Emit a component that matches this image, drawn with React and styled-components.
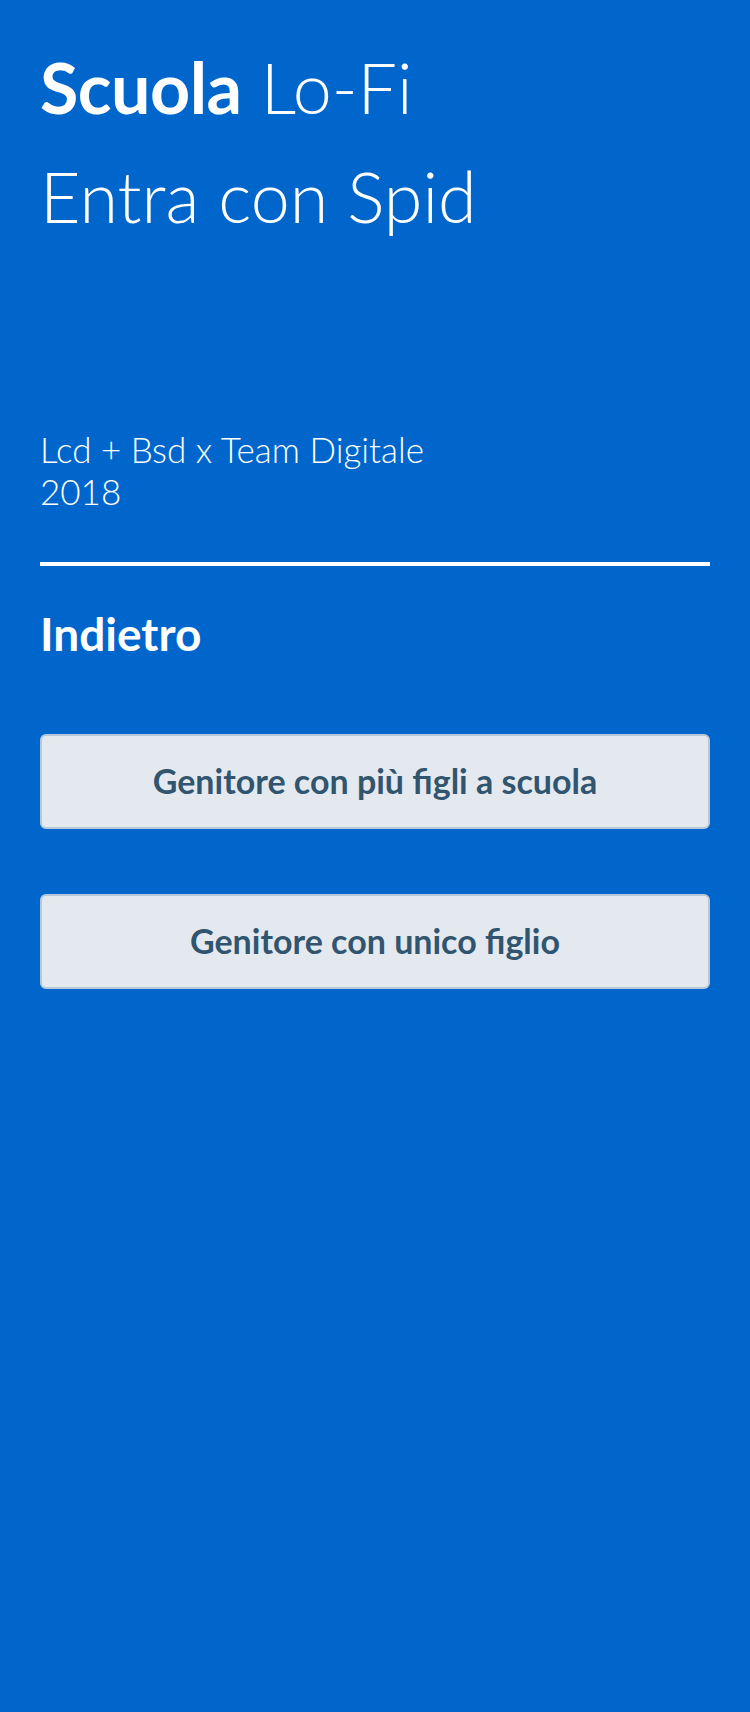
import React from 'react'
import styled, { createGlobalStyle } from 'styled-components'

const GlobalStyle = createGlobalStyle`
  html, body {
    margin: 0;
    padding: 0;
    background: #0066cc;
  }
  body {
    font-family: Lato, "Open Sans", "Liberation Sans", sans-serif;
    color: #fff;
  }
`

const Page = styled.main`
  min-height: 1712px;
  box-sizing: border-box;
  padding: 33px 40px 0;
  background: #0066cc;
`

const Title = styled.h1`
  margin: 0;
  font-size: 70px;
  font-weight: 300;
  line-height: 109px;
  b {
    font-weight: 700;
    letter-spacing: -0.5px;
  }
`

const Credits = styled.p`
  margin: 177px 0 0;
  font-size: 35px;
  font-weight: 300;
  line-height: 42px;
`

const Divider = styled.hr`
  margin: 50px 0 0;
  border: 0;
  height: 4px;
  background: #fff;
`

const Back = styled.a`
  display: block;
  margin-top: 40px;
  font-size: 46px;
  font-weight: 700;
  line-height: 56px;
  color: #fff;
  text-decoration: none;
`

const Choices = styled.div`
  display: flex;
  flex-direction: column;
  gap: 65px;
  margin-top: 72px;
`

const Choice = styled.button`
  height: 95px;
  padding: 0 0 3px;
  border: 2px solid #b7c7da;
  border-radius: 6px;
  background: #e4e9f0;
  color: #31556f;
  font-family: inherit;
  font-size: 34px;
  font-weight: 700;
  cursor: pointer;
`

export default function App() {
  return (
    <>
      <GlobalStyle />
      <Page>
        <Title>
          <b>Scuola</b> Lo-Fi
          <br />
          Entra con Spid
        </Title>
        <Credits>
          Lcd + Bsd x Team Digitale
          <br />
          2018
        </Credits>
        <Divider />
        <Back href="#">Indietro</Back>
        <Choices>
          <Choice>Genitore con più figli a scuola</Choice>
          <Choice>Genitore con unico figlio</Choice>
        </Choices>
      </Page>
    </>
  )
}
